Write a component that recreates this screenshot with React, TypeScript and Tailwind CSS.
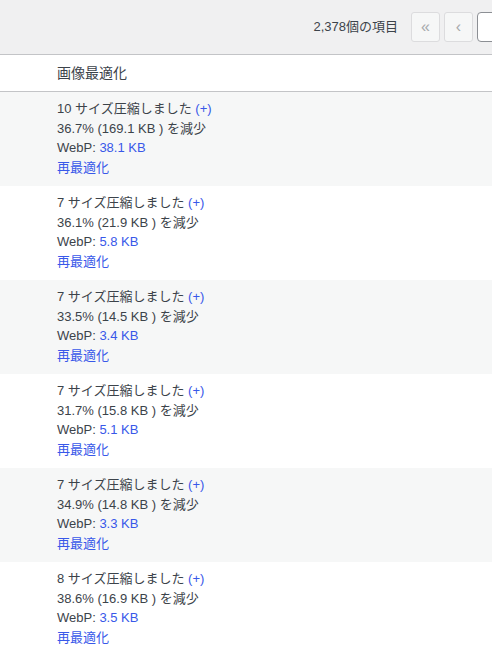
const rows = [
  { sizes: 10, pct: "36.7%", saved: "169.1 KB", webp: "38.1 KB" },
  { sizes: 7, pct: "36.1%", saved: "21.9 KB", webp: "5.8 KB" },
  { sizes: 7, pct: "33.5%", saved: "14.5 KB", webp: "3.4 KB" },
  { sizes: 7, pct: "31.7%", saved: "15.8 KB", webp: "5.1 KB" },
  { sizes: 7, pct: "34.9%", saved: "14.8 KB", webp: "3.3 KB" },
  { sizes: 8, pct: "38.6%", saved: "16.9 KB", webp: "3.5 KB" },
];

export default function App() {
  return (
    <div
      className="w-[492px] h-[656px] overflow-hidden bg-white text-[#3c434a]"
      style={{ fontFamily: '"Liberation Sans", "Noto Sans CJK JP", sans-serif' }}
    >
      {/* pagination bar */}
      <div className="h-[55px] bg-[#f0f0f1] border-b border-[#c3c4c7] flex items-center justify-end overflow-hidden">
        <span className="text-[13px] mr-[13px] whitespace-nowrap">2,378個の項目</span>
        <div className="flex items-center gap-[4px] shrink-0">
          <span className="w-[29px] h-[30px] border border-[#dcdcde] bg-[#f6f7f7] rounded-[3px] flex items-center justify-center text-[#a7aaad] text-[16px] leading-none">
            «
          </span>
          <span className="w-[29px] h-[30px] border border-[#dcdcde] bg-[#f6f7f7] rounded-[3px] flex items-center justify-center text-[#a7aaad] text-[16px] leading-none">
            ‹
          </span>
          <span className="w-[40px] h-[30px] border border-[#8c8f94] bg-white rounded-[4px] mr-[-25px]" />
        </div>
      </div>

      {/* column header */}
      <div className="h-[37px] border-b border-[#c3c4c7] flex items-center pl-[57px] text-[14px]">
        画像最適化
      </div>

      {rows.map((r, i) => (
        <div
          key={i}
          className={`h-[94px] pl-[57px] pt-[7px] text-[13px] leading-[19.5px] ${i % 2 === 0 ? "bg-[#f6f7f7]" : "bg-white"}`}
        >
          <div>
            {r.sizes} サイズ圧縮しました <span className="text-[#3858e9]">(+)</span>
          </div>
          <div>
            {r.pct} ({r.saved} ) を減少
          </div>
          <div>
            WebP: <span className="text-[#3858e9]">{r.webp}</span>
          </div>
          <div className="text-[#3858e9]">再最適化</div>
        </div>
      ))}
    </div>
  );
}
